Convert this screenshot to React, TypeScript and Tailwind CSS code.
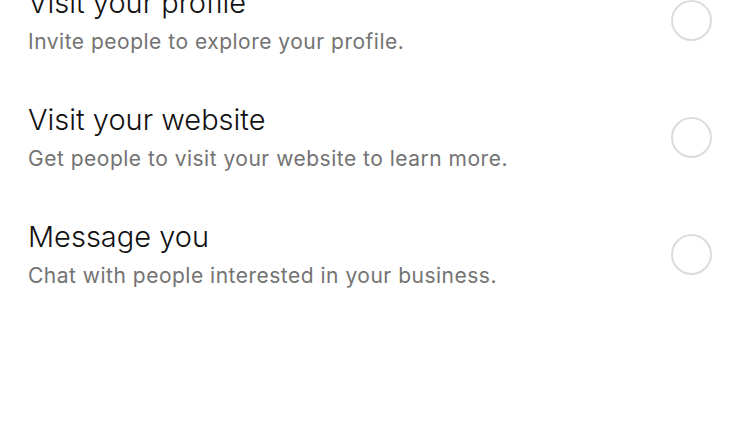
import React from "react";

const rows = [
  { title: "Visit your profile", sub: "Invite people to explore your profile." },
  { title: "Visit your website", sub: "Get people to visit your website to learn more." },
  { title: "Message you", sub: "Chat with people interested in your business." },
];

export default function App() {
  return (
    <div className="w-[740px] h-[445px] bg-white overflow-hidden" style={{ fontFamily: "Inter, 'Noto Sans', sans-serif" }}>
      <div className="flex flex-col mt-[-38px]">
        {rows.map((r) => (
          <div key={r.title} className="flex items-center justify-between pl-[28px] pr-[28px] h-[117px]">
            <div className="flex flex-col">
              <div className="text-[29px] leading-[34px] text-[#111111] font-light">{r.title}</div>
              <div className="text-[21px] leading-[26px] tracking-[0.5px] text-[#737373] mt-[9px]">{r.sub}</div>
            </div>
            <div className="w-[41px] h-[41px] rounded-full border-2 border-[#dcdcdc]" />
          </div>
        ))}
      </div>
    </div>
  );
}
